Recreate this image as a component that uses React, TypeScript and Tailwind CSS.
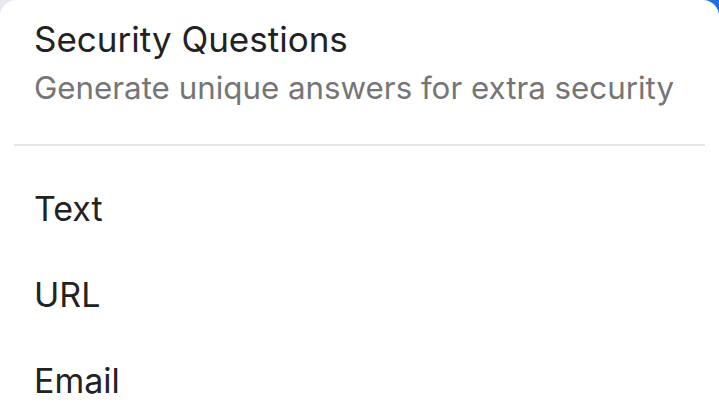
export default function App() {
  const items = ['Text', 'URL', 'Email']

  return (
    <div className="w-[719px] h-[418px] overflow-hidden bg-[linear-gradient(to_right,#e9e7f1,#e9e7f1_50%,#1b6fe3)]">
      <div
        className="h-full bg-white rounded-t-[16px] text-[#222222]"
        style={{ fontFamily: 'Inter, Roboto, sans-serif' }}
      >
        {/* Header */}
        <div className="pl-[34px] pt-[18px] pb-[35px]">
          <div className="text-[35px] leading-[42px]">Security Questions</div>
          <div className="text-[31.3px] leading-[42px] mt-[7px] text-[#757575]">
            Generate unique answers for extra security
          </div>
        </div>

        <div className="mx-[14px] h-[2px] bg-[#e6e6e6]" />

        {/* Items */}
        <div className="flex flex-col pt-[19px]">
          {items.map((item) => (
            <div key={item} className="pl-[34px] h-[86px] flex items-center text-[34px]">
              {item}
            </div>
          ))}
        </div>
      </div>
    </div>
  )
}
